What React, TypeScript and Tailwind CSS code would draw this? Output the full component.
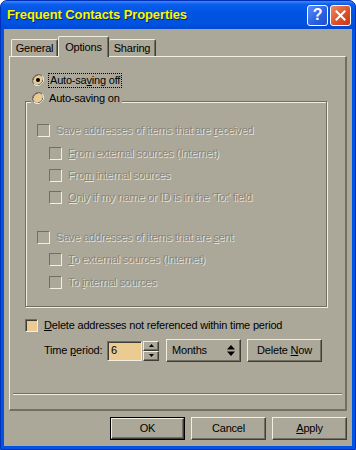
import React, { type ReactNode } from 'react'

// classic-ish XP dialog, custom grey scheme
const raised =
    'border border-t-[#f1efe2] border-l-[#f1efe2] border-r-[#3e3d36] border-b-[#3e3d36] shadow-[inset_-1px_-1px_0_#716f64]'

function Checkbox({ fill }: { fill?: boolean }) {
    return (
        <span
            className={
                fill
                    ? 'inline-block w-[13px] h-[13px] shrink-0 bg-[#ebcb92] border border-t-[#716f64] border-l-[#716f64] border-r-[#f1efe2] border-b-[#f1efe2] shadow-[inset_1px_1px_0_#3e3d36]'
                    : 'inline-block w-[13px] h-[13px] shrink-0 border border-t-[#716f64] border-l-[#716f64] border-r-[#f1efe2] border-b-[#f1efe2]'
            }
        />
    )
}

function Radio({ checked }: { checked?: boolean }) {
    return (
        <svg width="12" height="12" viewBox="0 0 12 12" className="shrink-0">
            <path d="M10.2 1.8A6 6 0 0 0 1.8 10.2" fill="none" stroke="#716f64" strokeWidth="1" />
            <path d="M1.8 10.2A6 6 0 0 0 10.2 1.8" fill="none" stroke="#f1efe2" strokeWidth="1" />
            <circle cx="6" cy="6" r="4.6" fill="#ebcb92" stroke="#3e3d36" strokeWidth="0.6" strokeDasharray="7 7" />
            {checked && <circle cx="6" cy="6" r="2" fill="#000" />}
        </svg>
    )
}

function Dis({ children }: { children: ReactNode }) {
    return <span className="text-[#87847a] [text-shadow:1px_1px_0_#e6e4d9] whitespace-nowrap">{children}</span>
}

function CheckRow({ children, className }: { children: ReactNode; className: string }) {
    return (
        <div className={`flex items-center h-4 gap-[6px] ${className}`}>
            <Checkbox />
            <Dis>{children}</Dis>
        </div>
    )
}

function Button({ children, def }: { children: ReactNode; def?: boolean }) {
    if (def) {
        return (
            <div className="w-[75px] h-[23px] border border-black">
                <div className={`w-full h-full flex items-center justify-center ${raised}`}>
                    <span>{children}</span>
                </div>
            </div>
        )
    }
    return (
        <div className={`w-[75px] h-[23px] flex items-center justify-center ${raised}`}>
            <span>{children}</span>
        </div>
    )
}

export default function App() {
    return (
        <div
            className="w-[356px] h-[450px] flex flex-col bg-[#0054e3] rounded-t-[7px] border border-[#0031b8] text-[11px] text-black tracking-[-0.2px]"
            style={{ fontFamily: '"Liberation Sans", Arial, sans-serif' }}
        >
            {/* title bar */}
            <div className="h-[28px] flex items-center pl-[6px] pr-[4px] rounded-t-[6px] bg-[linear-gradient(to_bottom,#3d8af7_0%,#0a5ded_12%,#0054e3_40%,#0053e0_80%,#0048d4_100%)]">
                <span className="flex-1 font-bold text-[13px] text-[#f8f800] [text-shadow:1px_1px_0_#0a1e7a] tracking-[-0.1px]">
                    Frequent Contacts Properties
                </span>
                <div className="flex gap-[2px]">
                    <div className="w-[21px] h-[21px] rounded-[3px] border border-white bg-[linear-gradient(135deg,#5b8ef8,#2a5fe0_60%,#1f4fd0)] flex items-center justify-center text-white font-bold text-[16px] leading-none">
                        ?
                    </div>
                    <div className="w-[21px] h-[21px] rounded-[3px] border border-white bg-[linear-gradient(135deg,#ee8a66,#dc4d25_60%,#c23a17)] flex items-center justify-center">
                        <svg width="11" height="11" viewBox="0 0 11 11">
                            <path d="M1.5 1.5L9.5 9.5M9.5 1.5L1.5 9.5" stroke="#fff" strokeWidth="2" strokeLinecap="square" />
                        </svg>
                    </div>
                </div>
            </div>

            {/* body */}
            <div className="flex-1 mx-[3px] mb-[3px] bg-[#aca899] pt-[7px] px-[5px] pb-[6px] flex flex-col">
                {/* tabs */}
                <div className="h-[20px] flex items-end pl-[2px]">
                    <div className="w-[47px] h-[17px] rounded-t-[2px] border-t border-l border-[#f1efe2] border-r border-r-[#3e3d36] shadow-[inset_-1px_0_0_#716f64] flex items-center justify-center pt-[1px]">
                        General
                    </div>
                    <div className="relative z-10 w-[51px] h-[21px] -mb-[1px] bg-[#aca899] rounded-t-[2px] border-t border-l border-[#f1efe2] border-r border-r-[#3e3d36] shadow-[inset_-1px_0_0_#716f64] flex justify-center pt-[2px]">
                        Options
                    </div>
                    <div className="w-[47px] h-[17px] rounded-t-[2px] border-t border-[#f1efe2] border-r border-r-[#3e3d36] shadow-[inset_-1px_0_0_#716f64] flex items-center justify-center pt-[1px]">
                        Sharing
                    </div>
                </div>

                {/* panel */}
                <div className="h-[355px] border-t border-l border-[#f1efe2] border-r-2 border-b-2 border-r-[#716f64] border-b-[#716f64] flex flex-col">
                    <div className="mt-[15px] h-4 flex items-center pl-[22px] gap-[4px]">
                        <Radio checked />
                        <span className="border border-dotted border-black px-[1px] leading-[13px] whitespace-nowrap">
                            Auto-sa<u>v</u>ing off
                        </span>
                    </div>

                    {/* group box */}
                    <div className="relative mt-[13px] ml-[15px] w-[302px] h-[206px] border border-[#716f64] shadow-[inset_1px_1px_0_#f1efe2,1px_1px_0_#f1efe2] flex flex-col">
                        <div className="absolute left-[5px] -top-[12px] h-4 flex items-center gap-[5px] bg-[#aca899] pl-[1px] pr-[2px]">
                            <Radio />
                            <span className="whitespace-nowrap">Auto-saving on</span>
                        </div>
                        <CheckRow className="mt-[20px] pl-[11px]">
                            Save addresses of items that are <u>r</u>eceived
                        </CheckRow>
                        <CheckRow className="mt-[7px] pl-[23px]">
                            <u>F</u>rom external sources (Internet)
                        </CheckRow>
                        <CheckRow className="mt-[6px] pl-[23px]">
                            Fro<u>m</u> internal sources
                        </CheckRow>
                        <CheckRow className="mt-[6px] pl-[23px]">
                            <u>O</u>nly if my name or ID is in the 'To:' field
                        </CheckRow>
                        <CheckRow className="mt-[24px] pl-[11px]">
                            Save addresses of items that are <u>s</u>ent
                        </CheckRow>
                        <CheckRow className="mt-[6px] pl-[23px]">
                            <u>T</u>o external sources (Internet)
                        </CheckRow>
                        <CheckRow className="mt-[7px] pl-[23px]">
                            To <u>i</u>nternal sources
                        </CheckRow>
                    </div>

                    <div className="mt-[10px] h-4 flex items-center pl-[15px] gap-[6px]">
                        <Checkbox fill />
                        <span className="whitespace-nowrap">
                            <u>D</u>elete addresses not referenced within time period
                        </span>
                    </div>

                    <div className="mt-[6px] h-[23px] flex items-center pl-[34px]">
                        <span className="w-[63px] whitespace-nowrap">
                            Time <u>p</u>eriod:
                        </span>
                        <div className="w-[35px] h-[20px] bg-[#ebcb92] border border-t-[#716f64] border-l-[#716f64] border-r-[#f1efe2] border-b-[#f1efe2] shadow-[inset_1px_1px_0_#3e3d36] flex items-center pl-[3px]">
                            6
                        </div>
                        <div className="ml-[1px] w-[16px] h-[20px] flex flex-col">
                            <div className={`flex-1 flex items-center justify-center ${raised}`}>
                                <svg width="5" height="3" viewBox="0 0 5 3">
                                    <path d="M2.5 0L5 3H0Z" fill="#000" />
                                </svg>
                            </div>
                            <div className={`flex-1 flex items-center justify-center ${raised}`}>
                                <svg width="5" height="3" viewBox="0 0 5 3">
                                    <path d="M0 0H5L2.5 3Z" fill="#000" />
                                </svg>
                            </div>
                        </div>
                        <div className={`ml-[7px] w-[75px] h-[23px] flex items-center justify-between pl-[5px] pr-[5px] ${raised}`}>
                            <span>Months</span>
                            <svg width="8" height="11" viewBox="0 0 8 11">
                                <path d="M4 0L8 4.5H0Z M0 6.5H8L4 11Z" fill="#000" />
                            </svg>
                        </div>
                        <div className={`ml-[6px] w-[75px] h-[23px] flex items-center justify-center ${raised}`}>
                            <span>
                                Delete <u>N</u>ow
                            </span>
                        </div>
                    </div>

                    <div className="mt-[31px] mx-[3px] h-[2px] border-t border-[#716f64] border-b border-b-[#f1efe2]" />
                </div>

                {/* buttons */}
                <div className="mt-[6px] flex justify-end gap-[6px]">
                    <Button def>OK</Button>
                    <Button>Cancel</Button>
                    <Button>
                        <u>A</u>pply
                    </Button>
                </div>
            </div>
        </div>
    )
}
